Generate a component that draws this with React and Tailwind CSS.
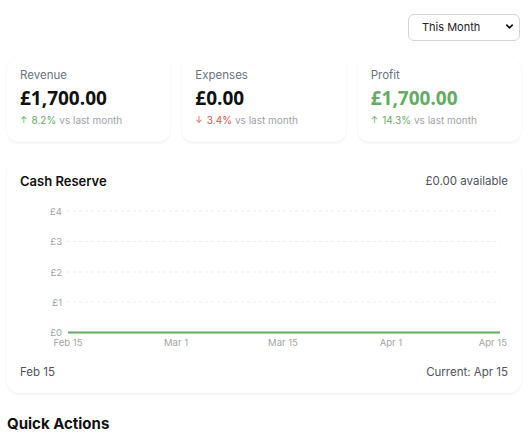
import { useState } from 'react';

const stats = [
  { label: 'Revenue', value: '£1,700.00', change: '8.2%', up: true, green: false },
  { label: 'Expenses', value: '£0.00', change: '3.4%', up: false, green: false },
  { label: 'Profit', value: '£1,700.00', change: '14.3%', up: true, green: true },
];

const yTicks = [
  { label: '£4', y: 11 },
  { label: '£3', y: 41.5 },
  { label: '£2', y: 72 },
  { label: '£1', y: 102 },
  { label: '£0', y: 132.5 },
];

const xTicks = [
  { label: 'Feb 15', x: 48, anchor: 'middle' },
  { label: 'Mar 1', x: 156, anchor: 'middle' },
  { label: 'Mar 15', x: 263, anchor: 'middle' },
  { label: 'Apr 1', x: 371, anchor: 'middle' },
  { label: 'Apr 15', x: 487, anchor: 'end' },
];

const StatCard = ({ stat }) => (
  <div className="bg-white rounded-xl shadow-[0_1px_3px_rgba(0,0,0,0.07)] px-[13px] pt-[10px] pb-[14px]">
    <div className="text-[11.5px] text-[#6b7280] leading-4">{stat.label}</div>
    <div
      className={`mt-[3px] text-[19px] font-bold leading-6 ${stat.green ? 'text-[#62ad5f]' : 'text-[#111]'}`}
      style={{ fontFamily: '"Open Sans", sans-serif' }}
    >
      {stat.value}
    </div>
    <div className="mt-[2px] flex items-center text-[10px] leading-4">
      <span className={`mr-[4px] text-[9px] ${stat.up ? 'text-[#62ad5f]' : 'text-[#d9534f]'}`}>{stat.up ? '↑' : '↓'}</span>
      <span className={stat.up ? 'text-[#62ad5f]' : 'text-[#d9534f]'}>{stat.change}</span>
      <span className="ml-[3px] text-[#a1a1aa]">vs last month</span>
    </div>
  </div>
);

export default function App() {
  const [period, setPeriod] = useState('month');

  return (
    <div className="w-[528px] h-[437px] overflow-hidden bg-white px-[7px] text-[#111]" style={{ fontFamily: 'Inter, "Noto Sans", sans-serif' }}>
      {/* Period picker */}
      <div className="flex justify-end pt-[13px] pr-px">
        <div className="relative">
          <select
            value={period}
            onChange={(e) => setPeriod(e.target.value)}
            className="appearance-none w-[112px] h-[27px] rounded-md border border-[#d4d4d8] bg-white pl-[13px] text-[11px] text-[#222] outline-none"
          >
            <option value="month">This Month</option>
            <option value="quarter">This Quarter</option>
            <option value="year">This Year</option>
          </select>
          <svg className="pointer-events-none absolute right-[6px] top-[9px] w-[9px] h-[9px]" viewBox="0 0 10 10" fill="none" stroke="#111" strokeWidth="1.8" strokeLinecap="round" strokeLinejoin="round">
            <path d="M2 3.5l3 3 3-3" />
          </svg>
        </div>
      </div>

      {/* Stats */}
      <div className="grid grid-cols-3 gap-3 mt-[16px]">
        {stats.map((s) => (
          <StatCard key={s.label} stat={s} />
        ))}
      </div>

      {/* Cash reserve */}
      <div className="mt-[18px] bg-white rounded-xl shadow-[0_1px_3px_rgba(0,0,0,0.07)] px-[13px] pt-[12px] pb-[11px]">
        <div className="flex items-center justify-between">
          <div className="text-[13px] font-semibold">Cash Reserve</div>
          <div className="text-[11.5px] text-[#52525b]">£0.00 available</div>
        </div>
        <svg className="block mt-[9px]" width="488" height="150" viewBox="0 0 488 150">
          {yTicks.map((t) => (
            <g key={t.label}>
              {t.label !== '£0' && (
                <line x1="47" x2="480" y1={t.y} y2={t.y} stroke="#ededed" strokeWidth="1" strokeDasharray="3 3" />
              )}
              <text x="42" y={t.y} dy="3.5" textAnchor="end" fontSize="9.5" fill="#a3a3a3">{t.label}</text>
            </g>
          ))}
          <line x1="48" x2="480" y1="132.5" y2="132.5" stroke="#62ad5f" strokeWidth="2" />
          {xTicks.map((t) => (
            <text key={t.label} x={t.x} y="146" textAnchor={t.anchor} fontSize="9.5" fill="#a3a3a3">{t.label}</text>
          ))}
        </svg>
        <div className="mt-[14px] flex items-center justify-between text-[11.5px] text-[#52525b]">
          <span>Feb 15</span>
          <span>Current: Apr 15</span>
        </div>
      </div>

      <div className="mt-[20px] text-[15px] font-bold">Quick Actions</div>
    </div>
  );
}
